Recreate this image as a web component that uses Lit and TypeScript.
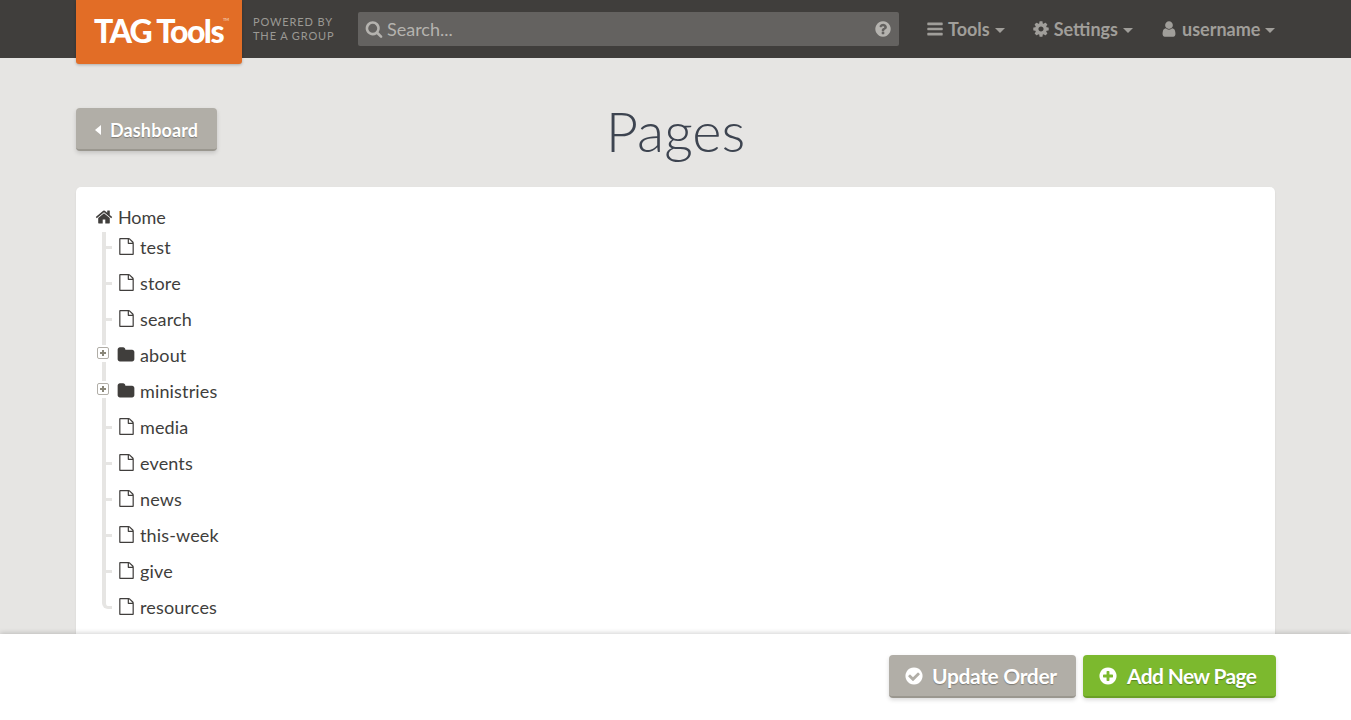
import { LitElement, html, css, svg } from "lit";
import { customElement } from "lit/decorators.js";

const P = {
  search: "M1216 832q0-185-131.5-316.5t-316.5-131.5-316.5 131.5-131.5 316.5 131.5 316.5 316.5 131.5 316.5-131.5 131.5-316.5zm512 832q0 52-38 90t-90 38q-54 0-90-38l-343-342q-179 124-399 124-143 0-273.5-55.5t-225-150-150-225-55.5-273.5 55.5-273.5 150-225 225-150 273.5-55.5 273.5 55.5 225 150 150 225 55.5 273.5q0 220-124 399l343 343q37 37 37 90z",
  question: "M1024 1376v-192q0-14-9-23t-23-9h-192q-14 0-23 9t-9 23v192q0 14 9 23t23 9h192q14 0 23-9t9-23zm256-672q0-88-55.5-163t-138.5-116-170-41q-243 0-371 213-15 24 8 42l132 100q7 6 19 6 16 0 25-12 53-68 86-92 34-24 86-24 48 0 85.5 26t37.5 59q0 38-20 61t-68 45q-63 28-115.5 86.5t-52.5 125.5v36q0 14 9 23t23 9h192q14 0 23-9t9-23q0-19 21.5-49.5t54.5-49.5q32-18 49-28.5t46-35 44.5-48 28-60.5 12.5-81zm384 192q0 209-103 385.5t-279.5 279.5-385.5 103-385.5-103-279.5-279.5-103-385.5 103-385.5 279.5-279.5 385.5-103 385.5 103 279.5 279.5 103 385.5z",
  bars: "M1664 1344v128q0 26-19 45t-45 19h-1408q-26 0-45-19t-19-45v-128q0-26 19-45t45-19h1408q26 0 45 19t19 45zm0-512v128q0 26-19 45t-45 19h-1408q-26 0-45-19t-19-45v-128q0-26 19-45t45-19h1408q26 0 45 19t19 45zm0-512v128q0 26-19 45t-45 19h-1408q-26 0-45-19t-19-45v-128q0-26 19-45t45-19h1408q26 0 45 19t19 45z",
  cog: "M1152 896q0-106-75-181t-181-75-181 75-75 181 75 181 181 75 181-75 75-181zm512-109v222q0 12-8 23t-20 13l-185 28q-19 54-39 91 35 50 107 138 10 12 10 25t-9 23q-27 37-99 108t-94 71q-12 0-26-9l-138-108q-44 23-91 38-16 136-29 186-7 28-36 28h-222q-14 0-24.5-8.5t-11.5-21.5l-28-184q-49-16-90-37l-141 107q-10 9-25 9-14 0-25-11-126-114-165-168-7-10-7-23 0-12 8-23 15-21 51-66.5t54-70.5q-27-50-41-99l-183-27q-13-2-21-12.5t-8-23.5v-222q0-12 8-23t19-13l186-28q14-46 39-92-40-57-107-138-10-12-10-24 0-10 9-23 26-36 98.5-107.5t94.5-71.5q13 0 26 10l138 107q44-23 91-38 16-136 29-186 7-28 36-28h222q14 0 24.5 8.5t11.5 21.5l28 184q49 16 90 37l142-107q9-9 24-9 13 0 25 10 129 119 165 170 7 8 7 22 0 12-8 23-15 21-51 66.5t-54 70.5q26 50 41 98l183 28q13 2 21 12.5t8 23.5z",
  user: "M1536 1399q0 109-62.5 187t-150.5 78h-854q-88 0-150.5-78t-62.5-187q0-85 8.5-160.5t31.5-152 58.5-131 94-89 134.5-34.5q131 128 313 128t313-128q76 0 134.5 34.5t94 89 58.5 131 31.5 152 8.5 160.5zm-256-887q0 159-112.5 271.5t-271.5 112.5-271.5-112.5-112.5-271.5 112.5-271.5 271.5-112.5 271.5 112.5 112.5 271.5z",
  home: "M1472 992v480q0 26-19 45t-45 19h-384v-384h-256v384h-384q-26 0-45-19t-19-45v-480q0-1 .5-3t.5-3l575-474 575 474q1 2 1 6zm223-69l-62 74q-8 9-21 11h-3q-13 0-21-7l-692-577-692 577q-12 8-24 7-13-2-21-11l-62-74q-8-10-7-23.5t11-21.5l719-599q32-26 76-26t76 26l244 204v-195q0-14 9-23t23-9h192q14 0 23 9t9 23v408l219 182q10 8 11 21.5t-7 23.5z",
  folder: "M1728 608v704q0 92-66 158t-158 66h-1216q-92 0-158-66t-66-158v-960q0-92 66-158t158-66h320q92 0 158 66t66 158v32h672q92 0 158 66t66 158z",
  file: "M1596 380q28 28 48 76t20 88v1152q0 40-28 68t-68 28h-1344q-40 0-68-28t-28-68v-1600q0-40 28-68t68-28h896q40 0 88 20t76 48zm-444-244v376h376q-10-29-22-41l-313-313q-12-12-41-22zm384 1528v-1024h-416q-40 0-68-28t-28-68v-416h-768v1536h1280z",
  check: "M1412 734q0-28-18-46l-91-90q-19-19-45-19t-45 19l-408 407-226-226q-19-19-45-19t-45 19l-91 90q-18 18-18 46 0 27 18 45l362 362q19 19 45 19 27 0 46-19l543-543q18-18 18-45zm252 162q0 209-103 385.5t-279.5 279.5-385.5 103-385.5-103-279.5-279.5-103-385.5 103-385.5 279.5-279.5 385.5-103 385.5 103 279.5 279.5 103 385.5z",
  plus: "M1344 960v-128q0-26-19-45t-45-19h-256v-256q0-26-19-45t-45-19h-128q-26 0-45 19t-19 45v256h-256q-26 0-45 19t-19 45v128q0 26 19 45t45 19h256v256q0 26 19 45t45 19h128q26 0 45-19t19-45v-256h256q26 0 45-19t19-45zm320-64q0 209-103 385.5t-279.5 279.5-385.5 103-385.5-103-279.5-279.5-103-385.5 103-385.5 279.5-279.5 385.5-103 385.5 103 279.5 279.5 103 385.5z",
};

const icon = (d: string, cls = "") =>
  html`<svg class="ic ${cls}" viewBox="0 0 1792 1792" aria-hidden="true">${svg`<path fill="currentColor" d=${d}></path>`}</svg>`;

const caret = html`<span class="caret"></span>`;

type Page = { name: string; folder?: boolean };
const pages: Page[] = [
  { name: "test" },
  { name: "store" },
  { name: "search" },
  { name: "about", folder: true },
  { name: "ministries", folder: true },
  { name: "media" },
  { name: "events" },
  { name: "news" },
  { name: "this-week" },
  { name: "give" },
  { name: "resources" },
];

@customElement("app-root")
export class AppRoot extends LitElement {
  static styles = css`
    :host {
      display: flex;
      flex-direction: column;
      height: 100vh;
      overflow: hidden;
      background: #e6e5e3;
      font-family: Lato, "Liberation Sans", sans-serif;
      color: #403e3c;
    }
    .ic { display: block; flex: none; }

    header {
      flex: none;
      height: 58px;
      background: #403e3c;
      display: flex;
      align-items: flex-start;
      padding: 0 76px;
      position: relative;
      z-index: 2;
    }
    .logo {
      flex: none;
      width: 166px;
      height: 64px;
      box-sizing: border-box;
      padding-left: 18px;
      background: #e26d26;
      border-radius: 0 0 3px 3px;
      box-shadow: 0 1px 3px rgba(0, 0, 0, 0.25);
      color: #fff;
      font-size: 32px;
      font-weight: 900;
      line-height: 61px;
      letter-spacing: -1.6px;
      white-space: nowrap;
      display: flex;
    }
    .logo sup {
      font-size: 4px;
      font-weight: 400;
      line-height: 1;
      letter-spacing: 0;
      margin-top: 18px;
      opacity: 0.8;
    }
    .powered {
      flex: none;
      width: 105px;
      margin-left: 11px;
      padding-top: 15px;
      font-size: 11px;
      line-height: 14px;
      letter-spacing: 0.87px;
      color: #9b9994;
      white-space: nowrap;
    }
    .search {
      flex: none;
      width: 541px;
      height: 34px;
      margin-top: 12px;
      box-sizing: border-box;
      background: #646260;
      border-radius: 2px;
      padding: 0 7px;
      display: flex;
      align-items: center;
      color: #b5b3af;
      font-size: 18px;
    }
    .search .label { flex: 1; margin-left: 4px; }
    .s18 { width: 18px; height: 18px; }
    nav {
      display: flex;
      align-items: center;
      height: 58px;
      margin-left: 27px;
      color: #a09e9a;
      font-size: 18px;
      font-weight: 700;
      white-space: nowrap;
    }
    .nav-item { display: flex; align-items: center; gap: 4px; }
    .nav-item + .nav-item { margin-left: 27px; }
    .caret {
      width: 0;
      height: 0;
      margin-left: 1px;
      margin-top: 2px;
      border-left: 5px solid transparent;
      border-right: 5px solid transparent;
      border-top: 5px solid currentColor;
    }

    main {
      flex: 1;
      min-height: 0;
      overflow: hidden;
      padding: 0 76px;
    }
    .title-row {
      position: relative;
      height: 129px;
      display: flex;
      align-items: flex-start;
    }
    .btn {
      display: inline-flex;
      align-items: center;
      box-sizing: border-box;
      height: 43px;
      border-radius: 4px;
      color: #fff;
      font-weight: 700;
      font-size: 18px;
      white-space: nowrap;
      text-shadow: 0 1px 1px rgba(0, 0, 0, 0.3);
      background: #b1aea7;
      border-bottom: 2px solid #9a978f;
      box-shadow: 0 2px 4px rgba(0, 0, 0, 0.15);
    }
    .back {
      margin-top: 50px;
      width: 141px;
      padding: 2px 0 0 19px;
      letter-spacing: 0.12px;
      position: relative;
      z-index: 1;
    }
    .back .tri {
      width: 0;
      height: 0;
      border-top: 5px solid transparent;
      border-bottom: 5px solid transparent;
      border-right: 6px solid #fff;
      margin-right: 9px;
    }
    h1 {
      position: absolute;
      left: 0;
      right: 0;
      top: 37px;
      margin: 0;
      text-align: center;
      font-weight: 300;
      font-size: 56px;
      line-height: 72px;
      color: #3d4450;
    }
    .card {
      background: #fff;
      border-radius: 5px;
      box-shadow: 0 1px 2px rgba(0, 0, 0, 0.08);
      padding: 15px 20px 40px;
      font-size: 18px;
      color: #403e3c;
    }
    .home {
      display: flex;
      align-items: center;
      height: 30px;
      gap: 5px;
      letter-spacing: -0.1px;
    }
    .home .ic { width: 18px; height: 18px; margin-left: -1px; }
    ul { list-style: none; margin: 0; padding: 0 0 0 6px; }
    li {
      position: relative;
      display: flex;
      height: 36px;
      line-height: 30px;
      align-items: flex-start;
    }
    .conn {
      flex: none;
      width: 16px;
      height: 100%;
      position: relative;
    }
    .conn::before {
      content: "";
      position: absolute;
      left: 0;
      top: 0;
      bottom: 0;
      width: 4px;
      background: #e6e5e3;
    }
    .conn::after {
      content: "";
      position: absolute;
      left: 4px;
      top: 14px;
      width: 6px;
      height: 3px;
      background: #e6e5e3;
    }
    li:last-child .conn::before { display: none; }
    li:last-child .conn::after {
      left: 0;
      top: 0;
      width: 6px;
      height: 14px;
      background: none;
      border-left: 4px solid #e6e5e3;
      border-bottom: 3px solid #e6e5e3;
      border-bottom-left-radius: 6px;
    }
    li.folder .conn::after { display: none; }
    li.folder .conn::before {
      background: linear-gradient(#e6e5e3 0 5px, transparent 5px 22px, #e6e5e3 22px);
    }
    .toggle {
      position: absolute;
      left: -5px;
      top: 7px;
      width: 12px;
      height: 12px;
      box-sizing: border-box;
      border: 1px solid #b1aea7;
      border-radius: 2px;
      background: #fff;
    }
    .toggle::before, .toggle::after {
      content: "";
      position: absolute;
      background: #8a8779;
    }
    .toggle::before { left: 2px; right: 2px; top: 4px; height: 2px; }
    .toggle::after { top: 2px; bottom: 2px; left: 4px; width: 2px; }
    .pg-icon {
      width: 18px;
      display: flex;
      justify-content: center;
      padding-top: 6px;
      margin: 0 5px 0 -1px;
      flex: none;
    }
    .pg-icon .ic { width: 17px; height: 17px; }
    .pg-icon.fold .ic { width: 18px; height: 18px; margin-left: -1px; }
    .name { letter-spacing: 0.15px; }

    footer {
      flex: none;
      height: 86px;
      box-sizing: border-box;
      background: #fff;
      box-shadow: 0 -1px 5px rgba(0, 0, 0, 0.18);
      display: flex;
      justify-content: flex-end;
      align-items: flex-start;
      gap: 7px;
      padding: 21px 75px 0 0;
      position: relative;
    }
    footer .btn {
      font-size: 21px;
      letter-spacing: -0.35px;
      padding-left: 15px;
      gap: 8px;
    }
    footer .ic { width: 20px; height: 20px; }
    .update { width: 187px; }
    footer .add {
      width: 193px;
      background: #7cb92e;
      border-bottom-color: #6a9f26;
      letter-spacing: -0.65px;
      gap: 9px;
    }
  `;

  render() {
    return html`
      <header>
        <div class="logo">TAG Tools<sup>TM</sup></div>
        <div class="powered">POWERED BY<br />THE A GROUP</div>
        <div class="search">
          ${icon(P.search, "s18")}
          <span class="label">Search...</span>
          ${icon(P.question, "s18")}
        </div>
        <nav>
          <div class="nav-item">${icon(P.bars, "s18")}<span>Tools</span>${caret}</div>
          <div class="nav-item">${icon(P.cog, "s18")}<span>Settings</span>${caret}</div>
          <div class="nav-item">${icon(P.user, "s18")}<span>username</span>${caret}</div>
        </nav>
      </header>
      <main>
        <div class="title-row">
          <div class="btn back"><span class="tri"></span>Dashboard</div>
          <h1>Pages</h1>
        </div>
        <section class="card">
          <div class="home">${icon(P.home)}<span>Home</span></div>
          <ul>
            ${pages.map(
              (p) => html`<li class=${p.folder ? "folder" : ""}>
                <span class="conn">${p.folder ? html`<span class="toggle"></span>` : ""}</span>
                <span class="pg-icon ${p.folder ? "fold" : ""}">${icon(p.folder ? P.folder : P.file)}</span>
                <span class="name">${p.name}</span>
              </li>`
            )}
          </ul>
        </section>
      </main>
      <footer>
        <div class="btn update">${icon(P.check)}<span>Update Order</span></div>
        <div class="btn add">${icon(P.plus)}<span>Add New Page</span></div>
      </footer>
    `;
  }
}
